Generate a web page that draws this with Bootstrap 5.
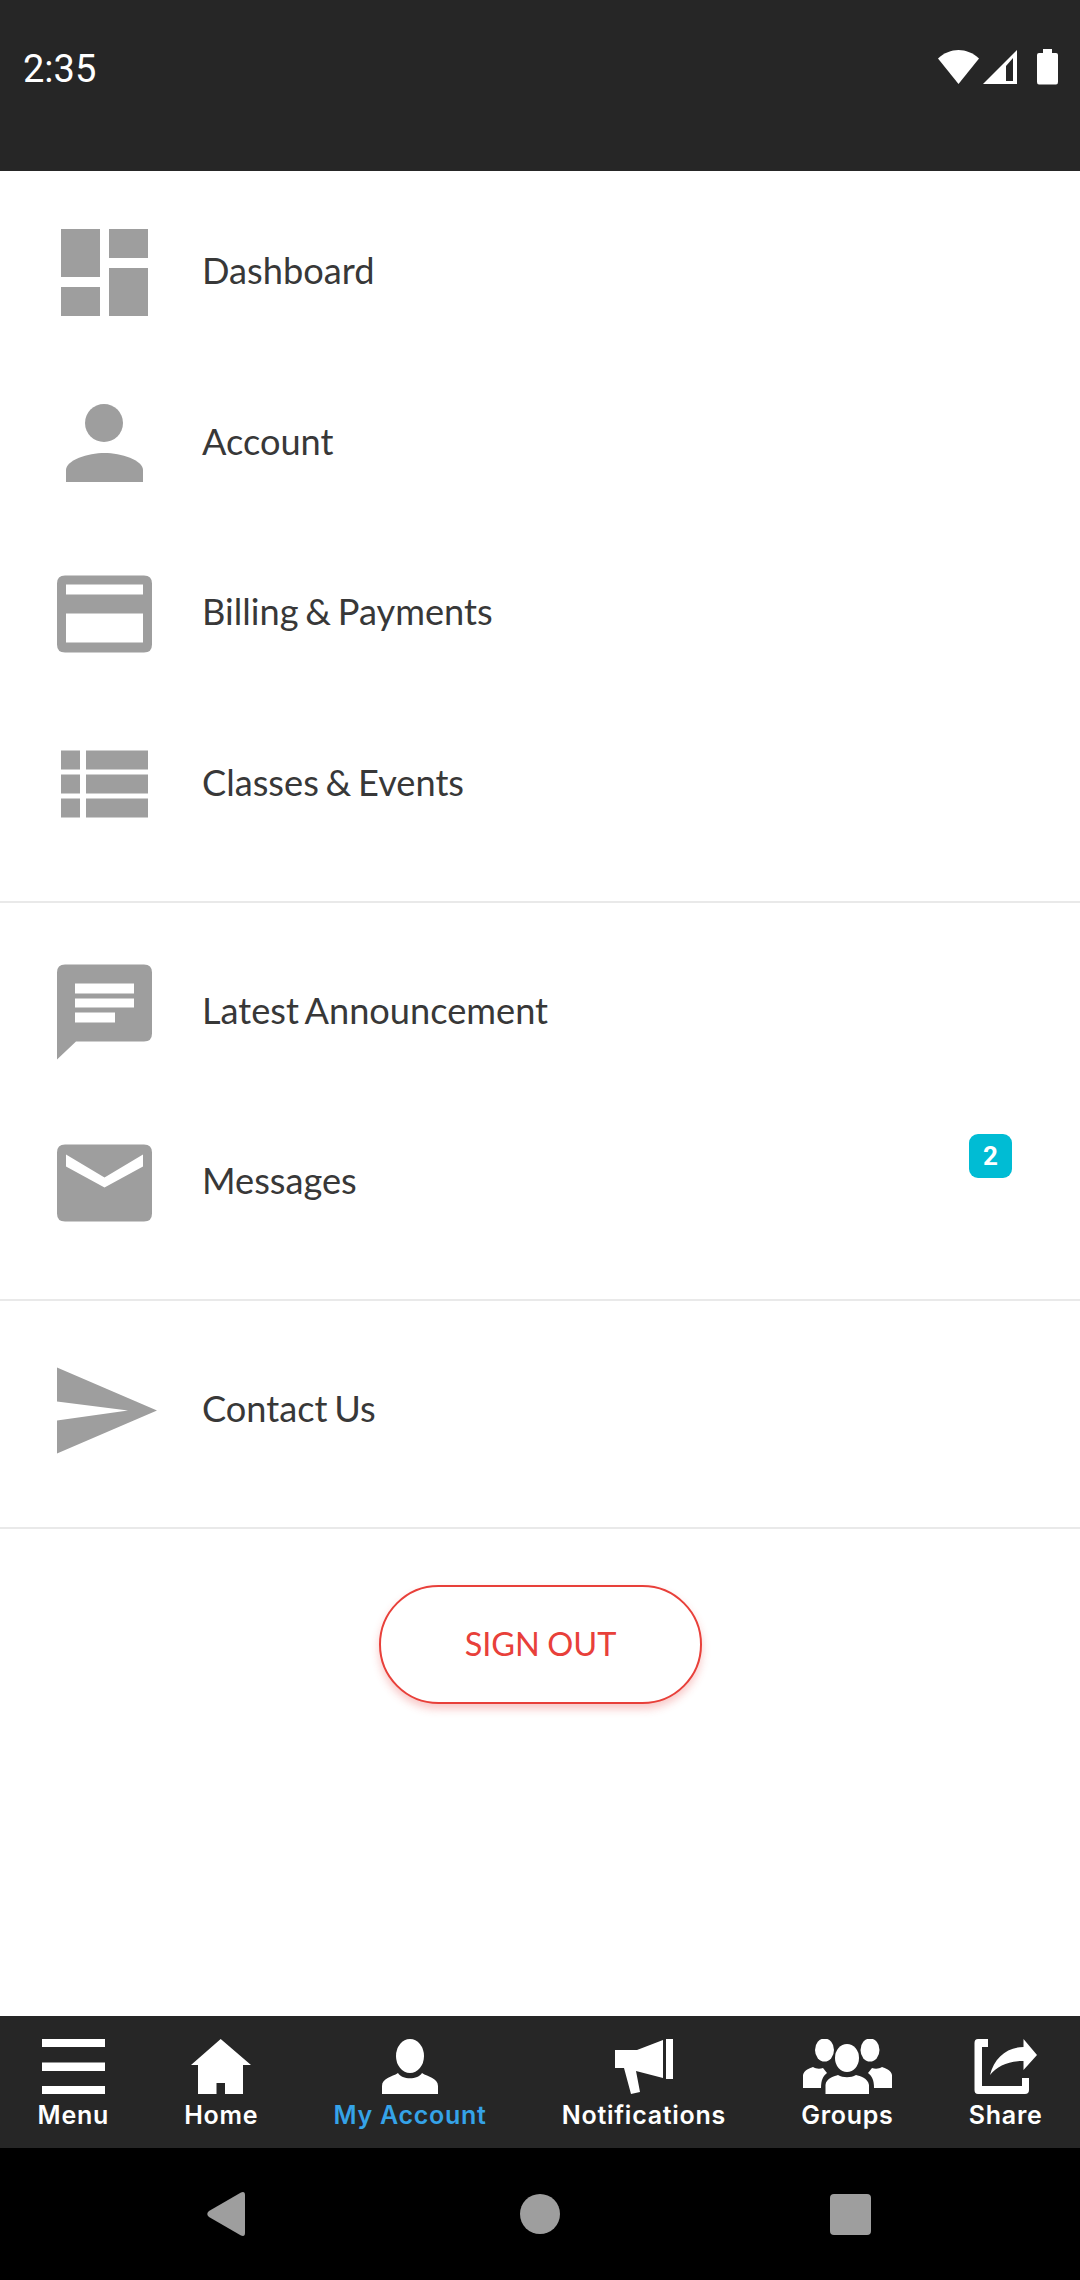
<!DOCTYPE html>
<html lang="en">
<head>
<meta charset="utf-8">
<title>My Account</title>
<link href="https://cdn.jsdelivr.net/npm/bootstrap@5.3.0/dist/css/bootstrap.min.css" rel="stylesheet">
<style>
html, body { margin: 0; height: 2280px; overflow: hidden; }
.app-shell { height: 2280px; background: #fff; font-family: "Lato", "Liberation Sans", sans-serif; }
.status-strip { height: 171px; background: #262626; color: #fff; padding: 49px 21px 0 23px; }
.status-time { font-family: "Roboto", "Liberation Sans", sans-serif; font-size: 38px; line-height: 38px; margin-top: 1px; }
.menu-group { padding: 24px 0 31px; border-bottom: 2px solid #e9e9e9; }
.menu-group-first { padding-top: 16px; }
.menu-row { height: 170.67px; background: transparent; color: #383838; font-size: 36.2px; word-spacing: -2.5px; }
.menu-glyph { width: 202px; padding-left: 57px; flex: none; }
.menu-glyph svg { display: block; }
.menu-glyph svg * { fill: #9e9e9e; }
.menu-label { margin-top: -4px; }
.count-pill { top: 37px; right: 68px; width: 43px; height: 44px; background: #00bcd4; border-radius: 9px; font-family: "Roboto", "Liberation Sans", sans-serif; font-size: 26px; font-weight: 700; word-spacing: 0; }
.signout-wrap { padding-top: 56px; padding-left: 1px; }
.signout-btn { width: 323px; height: 119px; border: 2px solid #e8403a; color: #e8403a; background: #fff; font-size: 32.5px; word-spacing: -1px; box-shadow: 0 5px 9px rgba(229,57,53,.28); }
.tab-strip { height: 132px; background: #262626; padding-top: 23px; }
.tab-item { padding: 0 37.6px; color: #fff; font-family: "Inter", "Liberation Sans", sans-serif; font-size: 25px; letter-spacing: .73px; font-weight: 600; line-height: 30px; white-space: nowrap; }
.tab-item svg { display: block; height: 55px; margin-bottom: 6px; }
.tab-item svg * { fill: #fff; }
.tab-active { color: #35a3e8; }
.system-strip { height: 132px; background: #000; }
.system-strip svg { display: block; }
</style>
</head>
<body>
<div class="app-shell d-flex flex-column">

  <div class="status-strip d-flex justify-content-between align-items-start flex-shrink-0">
    <span class="status-time">2:35</span>
    <svg width="121" height="36" viewBox="938 49 121 36" aria-hidden="true">
      <path fill="#fff" d="M938 58.5 C950 47 967 47 979 58.5 L958.5 84 Z"/>
      <path fill="#fff" fill-rule="evenodd" d="M983 84 L1017 50 V84 Z M1006 66 V81 H1013 V58 Z"/>
      <path fill="#fff" d="M1043 53 V49 H1052 V53 H1056 Q1058 53 1058 55 V82 Q1058 84.500 1056 84.500 H1039 Q1037 84.500 1037 82 V55 Q1037 53 1039 53 Z"/>
    </svg>
  </div>

  <div class="menu-group menu-group-first">
    <div class="list-group list-group-flush">
      <div class="list-group-item d-flex align-items-center border-0 p-0 menu-row">
        <span class="menu-glyph"><svg width="100" height="100" viewBox="57 222 100 100" aria-hidden="true"><rect x="61" y="229" width="39" height="48"/><rect x="61" y="287" width="39" height="29"/><rect x="109" y="229" width="39" height="29"/><rect x="109" y="268" width="39" height="48"/></svg></span>
        <span class="menu-label">Dashboard</span>
      </div>
      <div class="list-group-item d-flex align-items-center border-0 p-0 menu-row">
        <span class="menu-glyph"><svg width="100" height="100" viewBox="57 393 100 100" aria-hidden="true"><circle cx="104" cy="423" r="19"/><path d="M66 482 V470 C66 460 88 453 104.500 453 C121 453 143 460 143 470 V482 Z"/></svg></span>
        <span class="menu-label">Account</span>
      </div>
      <div class="list-group-item d-flex align-items-center border-0 p-0 menu-row">
        <span class="menu-glyph"><svg width="100" height="100" viewBox="57 563.500 100 100" aria-hidden="true"><path fill-rule="evenodd" d="M65 575 H144 Q152 575 152 583 V644 Q152 652 144 652 H65 Q57 652 57 644 V583 Q57 575 65 575 Z M66 584 V594 H143 V584 Z M66 613 V642 H143 V613 Z"/></svg></span>
        <span class="menu-label">Billing &amp; Payments</span>
      </div>
      <div class="list-group-item d-flex align-items-center border-0 p-0 menu-row">
        <span class="menu-glyph"><svg width="100" height="100" viewBox="57 734.500 100 100" aria-hidden="true"><rect x="61" y="751" width="19" height="19"/><rect x="86" y="751" width="62" height="19"/><rect x="61" y="775" width="19" height="19"/><rect x="86" y="775" width="62" height="19"/><rect x="61" y="799" width="19" height="19"/><rect x="86" y="799" width="62" height="19"/></svg></span>
        <span class="menu-label">Classes &amp; Events</span>
      </div>
    </div>
  </div>

  <div class="menu-group">
    <div class="list-group list-group-flush">
      <div class="list-group-item d-flex align-items-center border-0 p-0 menu-row">
        <span class="menu-glyph"><svg width="100" height="100" viewBox="57 961.500 100 100" aria-hidden="true"><path fill-rule="evenodd" d="M65 964 H144 Q152 964 152 972 V1033 Q152 1041 144 1041 H76 L57 1059 V972 Q57 964 65 964 Z M75 983 V993 H134 V983 Z M75 998 V1007 H134 V998 Z M75 1012 V1022 H115 V1012 Z"/></svg></span>
        <span class="menu-label">Latest Announcement</span>
      </div>
      <div class="list-group-item d-flex align-items-center border-0 p-0 menu-row position-relative">
        <span class="menu-glyph"><svg width="100" height="100" viewBox="57 1132.500 100 100" aria-hidden="true"><path fill-rule="evenodd" d="M65 1144 H144 Q152 1144 152 1152 V1213 Q152 1221 144 1221 H65 Q57 1221 57 1213 V1152 Q57 1144 65 1144 Z M66 1154 V1166 L104.500 1187 L143 1166 V1154 L104.500 1177 Z"/></svg></span>
        <span class="menu-label">Messages</span>
        <span class="badge position-absolute d-flex align-items-center justify-content-center p-0 count-pill">2</span>
      </div>
    </div>
  </div>

  <div class="menu-group">
    <div class="list-group list-group-flush">
      <div class="list-group-item d-flex align-items-center border-0 p-0 menu-row">
        <span class="menu-glyph"><svg width="100" height="100" viewBox="57 1360.500 100 100" aria-hidden="true"><path d="M57 1368 L157 1411 L57 1454 V1421 L128 1411 L57 1402 Z"/></svg></span>
        <span class="menu-label">Contact Us</span>
      </div>
    </div>
  </div>

  <div class="signout-wrap d-flex justify-content-center">
    <button type="button" class="btn rounded-pill d-flex align-items-center justify-content-center signout-btn">SIGN OUT</button>
  </div>

  <nav class="tab-strip d-flex mt-auto">
    <div class="tab-item d-flex flex-column align-items-center">
      <svg viewBox="41 2039 63 55" width="63" aria-hidden="true"><rect x="41" y="2039" width="63" height="8"/><rect x="41" y="2062.500" width="63" height="8.500"/><rect x="41" y="2086" width="63" height="8"/></svg>
      <span>Menu</span>
    </div>
    <div class="tab-item d-flex flex-column align-items-center">
      <svg viewBox="191 2039 60 55" width="60" aria-hidden="true"><path fill-rule="evenodd" d="M220.700 2039 L251 2065 H243 V2094 H225 V2083 H216.500 V2094 H198 V2065 H191 Z"/></svg>
      <span>Home</span>
    </div>
    <div class="tab-item tab-active d-flex flex-column align-items-center">
      <svg viewBox="382 2039 56 55" width="56" aria-hidden="true"><ellipse cx="410" cy="2056" rx="14" ry="17"/><path d="M382 2094 V2086 C382 2078 392 2077 398 2073 C402 2080 418 2080 422 2073 C428 2077 438 2078 438 2086 V2094 Z"/></svg>
      <span>My Account</span>
    </div>
    <div class="tab-item d-flex flex-column align-items-center">
      <svg viewBox="614 2039 58 55" width="58" aria-hidden="true"><rect x="665" y="2039" width="7" height="40"/><path d="M614 2050 H636 L662 2040 V2078 L635 2071 L639 2092 L630 2094 L623 2068 H614 Z"/></svg>
      <span>Notifications</span>
    </div>
    <div class="tab-item d-flex flex-column align-items-center">
      <svg viewBox="803 2039 89 55" width="89" aria-hidden="true"><ellipse cx="847" cy="2058" rx="12" ry="14"/><ellipse cx="824.500" cy="2050" rx="9.500" ry="11.500"/><ellipse cx="870" cy="2050" rx="9.500" ry="11.500"/><path d="M825.500 2094 V2085 C826 2078 835 2076 838 2075 C843 2078 851 2078 856 2075 C860 2076 868 2078 869 2085 V2094 Z"/><path d="M803 2088 V2075 C804 2070 810 2068 813 2067 C816 2069 820 2069 823 2068 L827 2073 C823 2076 821 2080 821 2088 Z"/><path d="M892 2088 V2075 C891 2070 885 2068 882 2067 C879 2069 875 2069 872 2068 L868 2073 C872 2076 874 2080 874 2088 Z"/></svg>
      <span>Groups</span>
    </div>
    <div class="tab-item d-flex flex-column align-items-center">
      <svg viewBox="975 2039 63 55" width="63" aria-hidden="true"><path d="M979 2039 H989 V2047 H983 V2086 H1023 V2078 H1030 V2090 Q1030 2094 1026 2094 H979 Q975.500 2094 975.500 2090 V2043 Q975.500 2039 979 2039 Z"/><path d="M1024.500 2039 L1038 2055 L1024.500 2070 V2061 C1010 2061 998 2066 991 2075 C995 2058 1008 2047 1024.500 2047 Z"/></svg>
      <span>Share</span>
    </div>
  </nav>

  <div class="system-strip d-flex justify-content-between align-items-center flex-shrink-0">
    <svg width="1080" height="132" viewBox="0 2148 1080 132" aria-hidden="true">
      <path fill="#9e9e9e" d="M241 2192.500 Q245 2191 245 2195 V2233 Q245 2237 241 2235.500 L209 2217 Q205.500 2214 209 2211 Z"/>
      <circle cx="540" cy="2214" r="20" fill="#9e9e9e"/>
      <rect x="830" y="2194" width="41" height="41" rx="4" fill="#9e9e9e"/>
    </svg>
  </div>
</div>
<script src="https://cdn.jsdelivr.net/npm/bootstrap@5.3.0/dist/js/bootstrap.bundle.min.js"></script>
</body>
</html>
